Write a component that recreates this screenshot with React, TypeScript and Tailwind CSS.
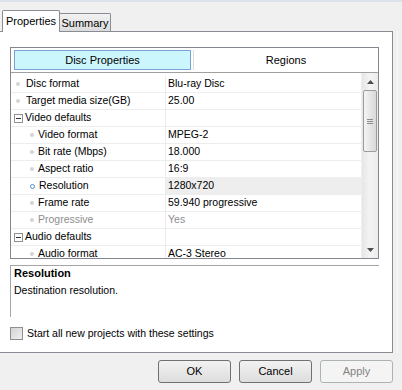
import React from 'react'

type Row = {
  name: string
  value?: string
  kind: 'item' | 'cat' | 'sub'
  selected?: boolean
  disabled?: boolean
}

const rows: Row[] = [
  { name: 'Disc format', value: 'Blu-ray Disc', kind: 'item' },
  { name: 'Target media size(GB)', value: '25.00', kind: 'item' },
  { name: 'Video defaults', kind: 'cat' },
  { name: 'Video format', value: 'MPEG-2', kind: 'sub' },
  { name: 'Bit rate (Mbps)', value: '18.000', kind: 'sub' },
  { name: 'Aspect ratio', value: '16:9', kind: 'sub' },
  { name: 'Resolution', value: '1280x720', kind: 'sub', selected: true },
  { name: 'Frame rate', value: '59.940 progressive', kind: 'sub' },
  { name: 'Progressive', value: 'Yes', kind: 'sub', disabled: true },
  { name: 'Audio defaults', kind: 'cat' },
  { name: 'Audio format', value: 'AC-3 Stereo', kind: 'sub' },
]

const NameCell = ({ row }: { row: Row }) => {
  if (row.kind === 'cat') {
    return (
      <div className="w-[155px] flex items-center pl-[3px] border-r border-[#ececec]">
        <div className="w-[9px] h-[9px] border border-[#919191] bg-white flex items-center justify-center">
          <div className="w-[5px] h-px bg-[#333]" />
        </div>
        <span className="ml-[2px]">{row.name}</span>
      </div>
    )
  }
  const isSub = row.kind === 'sub'
  return (
    <div className={`w-[155px] flex items-center border-r border-[#ececec] ${isSub ? 'pl-[19px]' : 'pl-[5px]'}`}>
      {row.selected ? (
        <div className="w-[5px] h-[5px] rounded-full border border-[#4c8ed0]" />
      ) : (
        <div className="w-[4px] h-[4px] rounded-full bg-[#d4d4d4]" />
      )}
      <span className={`${isSub ? 'ml-[4px]' : 'ml-[6px]'} ${row.disabled ? 'text-[#8d8d8d]' : ''}`}>{row.name}</span>
    </div>
  )
}

const Arrow = ({ up }: { up?: boolean }) => (
  <div className="h-[17px] flex items-center justify-center">
    <svg width="7" height="4" viewBox="0 0 7 4">
      {up ? <path d="M0 4 L3.5 0 L7 4 Z" fill="#4d4d4d" /> : <path d="M0 0 L3.5 4 L7 0 Z" fill="#4d4d4d" />}
    </svg>
  </div>
)

const Scrollbar = () => (
  <div className="w-[17px] flex flex-col bg-gradient-to-r from-[#e6e6e6] via-[#f4f4f4] to-[#ececec] border-l border-[#efefef]">
    <Arrow up />
    <div className="mx-px h-[62px] rounded-[2px] border border-[#9c9c9c] bg-gradient-to-r from-[#f4f4f4] to-[#d9d9d9] flex flex-col items-center justify-center gap-px">
      <div className="w-[6px] h-px bg-[#8c8c8c]" />
      <div className="w-[6px] h-px bg-[#8c8c8c]" />
      <div className="w-[6px] h-px bg-[#8c8c8c]" />
    </div>
    <div className="flex-1" />
    <Arrow />
  </div>
)

const Button = ({ label, disabled }: { label: string; disabled?: boolean }) => (
  <button
    className={`w-[73px] h-[23px] rounded-[3px] border text-[11px] ${
      disabled
        ? 'border-[#adb2b5] bg-[#f4f4f4] text-[#838383]'
        : 'border-[#707070] bg-gradient-to-b from-[#f2f2f2] to-[#dddddd] text-black'
    }`}
  >
    {label}
  </button>
)

export default function App() {
  return (
    <div className="w-[402px] h-[390px] bg-[#f0f0f0] flex flex-col overflow-hidden text-[10.5px] text-black" style={{ fontFamily: '"Liberation Sans", Arial, sans-serif' }}>
      <div className="h-[31px] flex items-end pl-[2px] border-t-2 border-[#dce2ea]">
        <div className="relative z-10 -mb-px w-[58px] h-[22px] bg-white border border-b-0 border-[#898c95] rounded-t-[2px] flex items-center justify-center text-[11px]">
          Properties
        </div>
        <div className="w-[51px] h-[18px] border border-l-0 border-b-0 border-[#898c95] rounded-tr-[2px] bg-gradient-to-b from-[#f2f2f2] to-[#dcdcdc] flex items-center justify-center text-[11px] pt-px">
          Summary
        </div>
      </div>

      <div className="flex">
        <div className="w-[393px] h-[322px] bg-white border-t border-r border-b border-[#898c95] pt-[15px] pl-[10px]">
          <div className="w-[369px] h-[212px] border border-[#828790] flex flex-col">
            <div className="h-[25px] flex border-b border-[#a0a0a0] pt-[2px] pb-[2px]">
              <div className="ml-[3px] w-[177px] h-[20px] bg-[#ccf6fd] border border-[#7ba2d3] flex items-center justify-center text-[11px]">
                Disc Properties
              </div>
              <div className="flex-1 ml-[2px] border-l border-[#dcdcdc] flex items-center justify-center text-[11px]">
                Regions
              </div>
            </div>
            <div className="flex-1 flex overflow-hidden">
              <div className="flex-1 flex flex-col pt-[3px]">
                {rows.map((r) => (
                  <div key={r.name} className="h-[17px] shrink-0 flex border-b border-[#ededed]">
                    <NameCell row={r} />
                    <div className={`flex-1 flex items-center pl-[2px] ${r.selected ? 'bg-[#eeeeee]' : ''} ${r.disabled ? 'text-[#8d8d8d]' : ''}`}>
                      {r.value ?? ''}
                    </div>
                  </div>
                ))}
              </div>
              <Scrollbar />
            </div>
          </div>

          <div className="mt-[6px] w-[369px] h-[52px] border-t border-l border-[#a5a5a5] pl-[3px]">
            <div className="font-bold text-[11px] leading-[15px]">Resolution</div>
            <div className="mt-[2px] leading-[15px]">Destination resolution.</div>
          </div>

          <div className="mt-[9px] flex items-center">
            <div className="w-[13px] h-[13px] border border-[#8e8f8f] bg-gradient-to-br from-[#d4d4d4] to-[#f0f0f0]" />
            <span className="ml-[4px]">Start all new projects with these settings</span>
          </div>
        </div>
        <div className="flex-1 pl-[4px]">
          <div className="w-px h-full bg-[#fafafa]" />
        </div>
      </div>

      <div className="flex-1 flex justify-end items-start pt-[7px] pr-[9px] gap-[8px]">
        <Button label="OK" />
        <Button label="Cancel" />
        <Button label="Apply" disabled />
      </div>
    </div>
  )
}
